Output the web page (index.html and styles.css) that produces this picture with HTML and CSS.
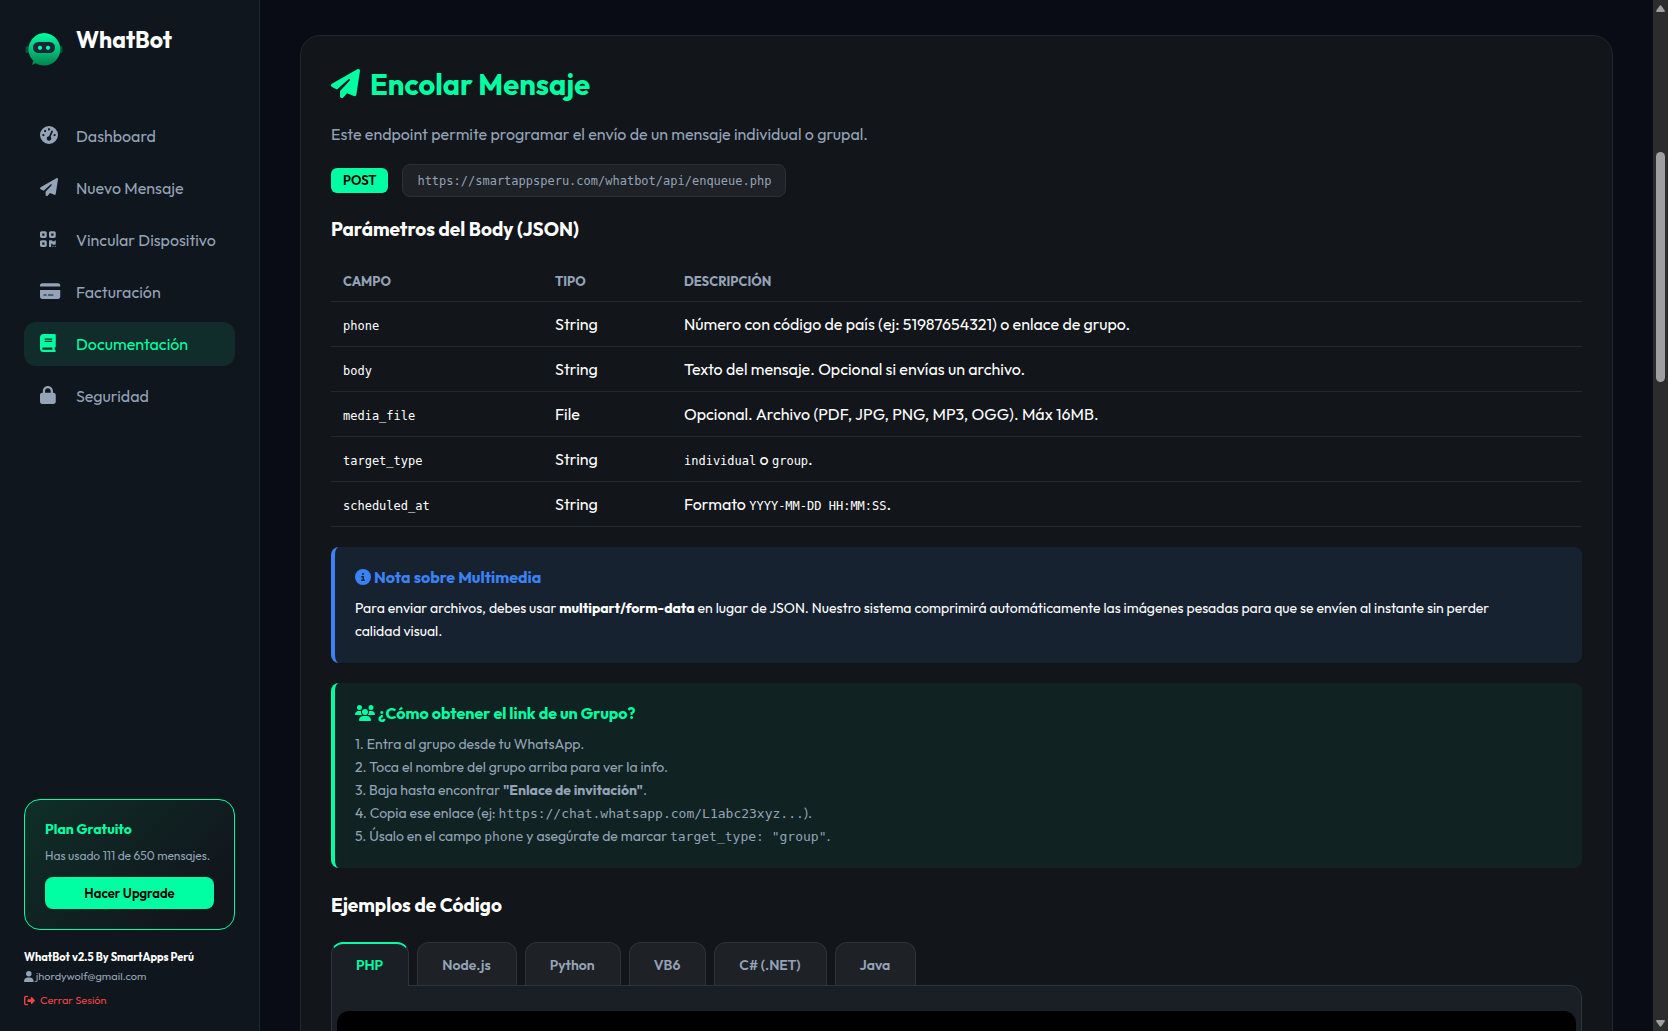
FILE: index.html
```html
<!DOCTYPE html>
<html lang="es">
<head>
<meta charset="utf-8">
<meta name="viewport" content="width=device-width, initial-scale=1">
<title>WhatBot - Documentación</title>
<link rel="stylesheet" href="styles.css">
</head>
<body>
<svg class="sprite" aria-hidden="true">
  <symbol id="plane" viewBox="0 0 512 512"><path d="M498.1 5.6c10.1 7 15.4 19.1 13.5 31.2l-64 416c-1.5 9.7-7.4 18.2-16 23s-18.9 5.4-28 1.6L284 427.7l-68.5 74.1c-8.9 9.7-22.9 12.9-35.2 8.1S160 493.2 160 480V396.4c0-4 1.5-7.8 4.2-10.7L331.8 202.8c5.8-6.3 5.6-16-.4-22s-15.7-6.4-22-.7L106 360.8 17.7 316.6C7.1 311.3 .3 300.7 0 288.9s5.9-22.8 16.1-28.7l448-256c10.7-6.1 23.9-5.5 34 1.4z"/></symbol>
</svg>
<div class="app">
  <aside class="sidebar">
    <div class="brand">
      <svg class="brand-logo" viewBox="0 0 40 40" aria-hidden="true">
        <defs><linearGradient id="bot" x1="0" y1="0" x2="0" y2="1"><stop offset="0" stop-color="#00ffa3"/><stop offset="1" stop-color="#04824f"/></linearGradient></defs>
        <rect x="1.500" y="17" width="4" height="7" rx="1.500" fill="#07513b"/>
        <rect x="34.500" y="17" width="4" height="7" rx="1.500" fill="#07513b"/>
        <path d="M20 4a16.300 16.300 0 1 1-8.500 30.200L8 36l1.200-4.200A16.300 16.300 0 0 1 20 4z" fill="url(#bot)"/>
        <rect x="9" y="13" width="22" height="11" rx="5.500" fill="#1b2638"/>
        <circle cx="16" cy="18.800" r="2.100" fill="#00ffa3"/>
        <circle cx="24" cy="18.800" r="2.100" fill="#00ffa3"/>
      </svg>
      <span class="brand-name">WhatBot</span>
    </div>
    <nav class="nav">
      <a class="nav-link" href="#dashboard"><svg class="nav-icon" viewBox="0 0 512 512" preserveAspectRatio="xMinYMid"><path d="M0 256a256 256 0 1 1 512 0A256 256 0 1 1 0 256zM288 96a32 32 0 1 0 -64 0 32 32 0 1 0 64 0zM256 416c35.3 0 64-28.700 64-64c0-17.400-6.900-33.100-18.100-44.600L366 161.700c5.300-12.100-.2-26.300-12.300-31.600s-26.300 .2-31.600 12.300L257.900 288c-.6 0-1.300 0-1.900 0c-35.300 0-64 28.700-64 64s28.700 64 64 64zM176 144a32 32 0 1 0 -64 0 32 32 0 1 0 64 0zM96 288a32 32 0 1 0 0-64 32 32 0 1 0 0 64zm352-32a32 32 0 1 0 -64 0 32 32 0 1 0 64 0z"/></svg><span>Dashboard</span></a>
      <a class="nav-link" href="#mensaje"><svg class="nav-icon" viewBox="0 0 512 512" preserveAspectRatio="xMinYMid"><use href="#plane" width="512" height="512"/></svg><span>Nuevo Mensaje</span></a>
      <a class="nav-link" href="#vincular"><svg class="nav-icon" viewBox="0 0 448 512" preserveAspectRatio="xMinYMid"><path d="M0 80C0 53.500 21.500 32 48 32h96c26.500 0 48 21.500 48 48v96c0 26.500-21.500 48-48 48H48c-26.500 0-48-21.500-48-48V80zM64 96v64h64V96H64zM0 336c0-26.500 21.500-48 48-48h96c26.500 0 48 21.500 48 48v96c0 26.500-21.500 48-48 48H48c-26.500 0-48-21.500-48-48V336zm64 16v64h64V352H64zM304 32h96c26.500 0 48 21.500 48 48v96c0 26.500-21.500 48-48 48H304c-26.500 0-48-21.500-48-48V80c0-26.500 21.500-48 48-48zm80 64H320v64h64V96zM256 304c0-8.800 7.200-16 16-16h64c8.800 0 16 7.200 16 16s7.200 16 16 16h32c8.800 0 16-7.200 16-16s7.200-16 16-16s16 7.200 16 16v96c0 8.800-7.200 16-16 16H368c-8.800 0-16-7.200-16-16s-7.200-16-16-16s-16 7.200-16 16v64c0 8.800-7.200 16-16 16H272c-8.800 0-16-7.200-16-16V304zM368 480a16 16 0 1 1 0-32 16 16 0 1 1 0 32zm64 0a16 16 0 1 1 0-32 16 16 0 1 1 0 32z"/></svg><span>Vincular Dispositivo</span></a>
      <a class="nav-link" href="#facturacion"><svg class="nav-icon" viewBox="0 0 576 512" preserveAspectRatio="xMinYMid"><path d="M64 32C28.700 32 0 60.700 0 96v32H576V96c0-35.300-28.700-64-64-64H64zM576 224H0V416c0 35.300 28.700 64 64 64H512c35.300 0 64-28.700 64-64V224zM112 352h64c8.800 0 16 7.200 16 16s-7.200 16-16 16H112c-8.800 0-16-7.200-16-16s7.200-16 16-16zm112 16c0-8.800 7.200-16 16-16H368c8.800 0 16 7.200 16 16s-7.200 16-16 16H240c-8.800 0-16-7.200-16-16z"/></svg><span>Facturación</span></a>
      <a class="nav-link active" href="#documentacion" aria-current="page"><svg class="nav-icon" viewBox="0 0 448 512" preserveAspectRatio="xMinYMid"><path d="M96 0C43 0 0 43 0 96V416c0 53 43 96 96 96H384h32c17.700 0 32-14.300 32-32s-14.300-32-32-32V384c17.700 0 32-14.300 32-32V32c0-17.700-14.300-32-32-32H384 96zm0 384H352v64H96c-17.700 0-32-14.300-32-32s14.300-32 32-32zm32-240c0-8.800 7.200-16 16-16H336c8.800 0 16 7.200 16 16s-7.200 16-16 16H144c-8.800 0-16-7.200-16-16zm16 48H336c8.800 0 16 7.200 16 16s-7.200 16-16 16H144c-8.800 0-16-7.200-16-16s7.200-16 16-16z"/></svg><span>Documentación</span></a>
      <a class="nav-link" href="#seguridad"><svg class="nav-icon" viewBox="0 0 448 512" preserveAspectRatio="xMinYMid"><path d="M144 144v48H304V144c0-44.200-35.800-80-80-80s-80 35.800-80 80zM80 192V144C80 64.500 144.500 0 224 0s144 64.500 144 144v48h16c35.300 0 64 28.700 64 64V448c0 35.300-28.700 64-64 64H64c-35.300 0-64-28.700-64-64V256c0-35.300 28.700-64 64-64H80z"/></svg><span>Seguridad</span></a>
    </nav>
    <div class="plan">
      <div class="plan-title">Plan Gratuito</div>
      <div class="plan-usage">Has usado 111 de 650 mensajes.</div>
      <button class="plan-button" type="button">Hacer Upgrade</button>
    </div>
    <div class="account">
      <div class="account-name">WhatBot v2.5 By SmartApps Perú</div>
      <div class="account-mail"><svg class="account-icon" viewBox="0 0 448 512"><path d="M224 256A128 128 0 1 0 224 0a128 128 0 1 0 0 256zm-45.700 48C79.800 304 0 383.800 0 482.300C0 498.700 13.300 512 29.700 512H418.300c16.400 0 29.700-13.300 29.700-29.700C448 383.800 368.200 304 269.700 304H178.300z"/></svg>jhordywolf@gmail.com</div>
      <a class="logout" href="#salir"><svg class="account-icon" viewBox="0 0 512 512"><path d="M377.900 105.900L500.700 228.700c7.200 7.200 11.300 17.100 11.300 27.300s-4.100 20.100-11.300 27.300L377.900 406.100c-6.400 6.400-15 9.900-24 9.900c-18.700 0-33.900-15.200-33.900-33.900l0-62.100-128 0c-17.700 0-32-14.300-32-32l0-64c0-17.700 14.300-32 32-32l128 0 0-62.100c0-18.700 15.200-33.900 33.900-33.900c9 0 17.600 3.600 24 9.900zM160 96L96 96c-17.700 0-32 14.300-32 32l0 256c0 17.700 14.300 32 32 32l64 0c17.700 0 32 14.300 32 32s-14.300 32-32 32l-64 0c-53 0-96-43-96-96L0 128C0 75 43 32 96 32l64 0c17.700 0 32 14.300 32 32s-14.300 32-32 32z"/></svg>Cerrar Sesión</a>
    </div>
  </aside>

  <main class="main">
    <section class="card">
      <h1 class="title"><svg class="title-icon" viewBox="0 0 512 512" aria-hidden="true"><use href="#plane" width="512" height="512"/></svg>Encolar Mensaje</h1>
      <p class="lead">Este endpoint permite programar el envío de un mensaje individual o grupal.</p>
      <div class="endpoint">
        <span class="method">POST</span>
        <code class="url">https://smartappsperu.com/whatbot/api/enqueue.php</code>
      </div>
      <h2 class="subtitle">Parámetros del Body (JSON)</h2>
      <table class="params">
        <colgroup><col class="col-field"><col class="col-type"><col></colgroup>
        <thead><tr><th>CAMPO</th><th>TIPO</th><th>DESCRIPCIÓN</th></tr></thead>
        <tbody>
          <tr><td><code>phone</code></td><td>String</td><td>Número con código de país (ej: 51987654321) o enlace de grupo.</td></tr>
          <tr><td><code>body</code></td><td>String</td><td>Texto del mensaje. Opcional si envías un archivo.</td></tr>
          <tr><td><code>media_file</code></td><td>File</td><td>Opcional. Archivo (PDF, JPG, PNG, MP3, OGG). Máx 16MB.</td></tr>
          <tr><td><code>target_type</code></td><td>String</td><td><code>individual</code> o <code>group</code>.</td></tr>
          <tr><td><code>scheduled_at</code></td><td>String</td><td>Formato <code>YYYY-MM-DD HH:MM:SS</code>.</td></tr>
        </tbody>
      </table>
      <div class="note note-info">
        <h3 class="note-title"><svg class="note-icon" viewBox="0 0 512 512" aria-hidden="true"><path d="M256 512A256 256 0 1 0 256 0a256 256 0 1 0 0 512zM216 336h24V272H216c-13.300 0-24-10.700-24-24s10.700-24 24-24h48c13.300 0 24 10.700 24 24v88h8c13.300 0 24 10.700 24 24s-10.700 24-24 24H216c-13.300 0-24-10.700-24-24s10.700-24 24-24zm40-208a32 32 0 1 1 0 64 32 32 0 1 1 0-64z"/></svg>Nota sobre Multimedia</h3>
        <p class="note-text">Para enviar archivos, debes usar <strong>multipart/form-data</strong> en lugar de JSON. Nuestro sistema comprimirá automáticamente las imágenes pesadas para que se envíen al instante sin perder <br>calidad visual.</p>
      </div>
      <div class="note note-group">
        <h3 class="note-title"><svg class="note-icon" viewBox="0 0 640 512" aria-hidden="true"><path d="M144 0a80 80 0 1 1 0 160A80 80 0 1 1 144 0zM512 0a80 80 0 1 1 0 160A80 80 0 1 1 512 0zM0 298.700C0 239.800 47.800 192 106.700 192h42.700c15.900 0 31 3.500 44.600 9.700c-1.300 7.200-1.900 14.700-1.900 22.300c0 38.200 16.800 72.500 43.300 96c-.2 0-.4 0-.7 0H21.300C9.600 320 0 310.400 0 298.700zM405.300 320c-.2 0-.4 0-.7 0c26.600-23.500 43.300-57.800 43.300-96c0-7.600-.7-15-1.900-22.300c13.600-6.300 28.700-9.700 44.600-9.700h42.700C592.200 192 640 239.800 640 298.700c0 11.800-9.600 21.300-21.300 21.300H405.300zM224 224a96 96 0 1 1 192 0 96 96 0 1 1 -192 0zM128 485.300C128 411.700 187.700 352 261.300 352H378.700C452.300 352 512 411.700 512 485.300c0 14.700-11.900 26.700-26.700 26.700H154.700c-14.700 0-26.700-11.900-26.700-26.700z"/></svg>¿Cómo obtener el link de un Grupo?</h3>
        <p class="note-text">1. Entra al grupo desde tu WhatsApp.<br>2. Toca el nombre del grupo arriba para ver la info.<br>3. Baja hasta encontrar <strong>"Enlace de invitación"</strong>.<br>4. Copia ese enlace (ej: <code>https://chat.whatsapp.com/L1abc23xyz...</code>).<br>5. Úsalo en el campo <code>phone</code> y asegúrate de marcar <code>target_type: "group"</code>.</p>
      </div>
      <h2 class="subtitle">Ejemplos de Código</h2>
      <div class="tabs" role="tablist">
        <button class="tab active" type="button" role="tab" aria-selected="true">PHP</button>
        <button class="tab" type="button" role="tab">Node.js</button>
        <button class="tab" type="button" role="tab">Python</button>
        <button class="tab" type="button" role="tab">VB6</button>
        <button class="tab" type="button" role="tab">C# (.NET)</button>
        <button class="tab" type="button" role="tab">Java</button>
      </div>
      <div class="panel" role="tabpanel"><pre class="code"></pre></div>
    </section>
  </main>

  <div class="scrollbar" aria-hidden="true">
    <svg class="scroll-arrow" viewBox="0 0 9 7"><path d="M3.500 1q1-1.500 2 0l3.200 4.500q.6 1.500-.7 1.500H1Q-.3 7 .3 5.500z"/></svg>
    <div class="scroll-track"><div class="scroll-thumb"></div></div>
    <svg class="scroll-arrow down" viewBox="0 0 9 7"><path d="M3.500 1q1-1.500 2 0l3.200 4.500q.6 1.500-.7 1.500H1Q-.3 7 .3 5.500z"/></svg>
  </div>
</div>
</body>
</html>
```
FILE: styles.css
```css
:root {
  --accent: #00ffa3;
  --muted: #94a3b8;
  --line: #2f3337;
  --sans: Outfit, Lato, sans-serif;
  --mono: "DejaVu Sans Mono", monospace;
}

* { box-sizing: border-box; }

body {
  margin: 0;
  background: #090c14;
  color: #fff;
  font-family: var(--sans);
  font-size: 16px;
  line-height: 24px;
}

h1, h2, h3, p, pre { margin: 0; }
button { font-family: inherit; cursor: pointer; }
a { text-decoration: none; }
svg { fill: currentColor; flex: none; }
code { font-family: var(--mono); }

.sprite { display: none; }

.app {
  display: flex;
  height: 100vh;
  overflow: hidden;
}

/* Sidebar */
.sidebar {
  display: flex;
  flex-direction: column;
  flex: none;
  width: 260px;
  padding: 24px;
  background: #10161d;
  border-right: 1px solid #22272f;
}

.brand {
  display: flex;
  align-items: center;
  gap: 12px;
  height: 50px;
  margin-bottom: 40px;
}

.brand-logo { width: 40px; height: 40px; }

.brand-name {
  align-self: flex-start;
  font-size: 23px;
  font-weight: 700;
  line-height: 32px;
}

.nav {
  display: flex;
  flex-direction: column;
  gap: 8px;
  margin-bottom: auto;
}

.nav-link {
  display: flex;
  align-items: flex-start;
  padding: 12px 16px;
  border-radius: 12px;
  color: var(--muted);
  line-height: 20px;
}

.nav-icon {
  width: 36px;
  height: 18px;
}

.nav-link.active {
  background: #102c2b;
  color: var(--accent);
}

.plan {
  margin-bottom: 19px;
  padding: 20px;
  border: 1px solid var(--accent);
  border-radius: 16px;
  background: linear-gradient(135deg, #0f2f28, #11151c 85%);
}

.plan-title {
  margin-bottom: 10px;
  color: var(--accent);
  font-size: 14px;
  font-weight: 700;
  line-height: 18px;
}

.plan-usage {
  margin-bottom: 13px;
  color: var(--muted);
  font-size: 12px;
  line-height: 16px;
}

.plan-button {
  width: 100%;
  height: 32px;
  padding: 0;
  border: 0;
  border-radius: 8px;
  background: var(--accent);
  color: #000;
  font-size: 13px;
  font-weight: 600;
}

.account {
  color: var(--muted);
  font-size: 11px;
  line-height: 16px;
}

.account-name {
  margin-bottom: 3px;
  color: #fff;
  font-weight: 700;
}

.account-mail {
  display: flex;
  align-items: center;
  gap: 2px;
  margin-bottom: 9px;
}

.logout {
  display: flex;
  align-items: center;
  gap: 5px;
  color: #ef4444;
  line-height: 14px;
}

.account-icon { height: 11px; }

/* Content */
.main {
  flex: 1;
  min-width: 0;
  padding: 35px 40px;
}

.card {
  padding: 30px;
  border: 1px solid #22262b;
  border-radius: 20px;
  background: #12161a;
}

.title {
  display: flex;
  align-items: center;
  gap: 10px;
  margin-bottom: 18px;
  color: var(--accent);
  font-size: 29px;
  font-weight: 700;
  line-height: 38px;
}

.title-icon {
  width: 29px;
  height: 29px;
  margin-bottom: 4px;
}

.lead {
  margin-bottom: 18px;
  color: var(--muted);
}

.endpoint {
  display: flex;
  align-items: center;
  gap: 14px;
  margin-bottom: 20px;
}

.method {
  padding: 2px 12px;
  border-radius: 6px;
  background: var(--accent);
  color: #000;
  font-size: 13px;
  font-weight: 600;
  line-height: 21px;
}

.url {
  padding: 6px 14px 4px;
  border: 1px solid #2d3135;
  border-radius: 8px;
  background: #1e2125;
  color: var(--muted);
  font-size: 12px;
  line-height: 21px;
}

.subtitle {
  font-size: 19px;
  font-weight: 700;
  line-height: 24px;
}

.params {
  width: 100%;
  margin: 20px 0;
  border-collapse: separate;
  border-spacing: 0;
  table-layout: fixed;
}

.col-field { width: 212px; }
.col-type { width: 129px; }

.params th,
.params td {
  padding: 10px 12px;
  border-bottom: 1px solid #25292d;
  text-align: left;
}

.params th {
  color: var(--muted);
  font-size: 13px;
  line-height: 20px;
}

.params code {
  font-size: 12px;
  line-height: 20px;
}

.note {
  margin-bottom: 20px;
  padding: 20px;
  border-left: 4px solid;
  border-radius: 8px;
}

.note-info {
  border-color: #3b82f6;
  background: #172231;
}

.note-group {
  margin-bottom: 25px;
  border-color: var(--accent);
  background: #102221;
}

.note-title {
  display: flex;
  align-items: center;
  gap: 3px;
  margin-bottom: 10px;
  font-size: 16px;
  font-weight: 700;
  line-height: 20px;
}

.note-info .note-title { color: #3b82f6; }
.note-group .note-title { color: var(--accent); }
.note-icon { height: 16px; }

.note-text {
  font-size: 14px;
  line-height: 23px;
}

.note-text code {
  font-size: 13px;
  line-height: 20px;
}

.note-group .note-text { color: var(--muted); }

.tabs {
  display: flex;
  gap: 8px;
  margin: 25px 0 -1px;
}

.tab {
  height: 43px;
  padding: 1px 25px 0 24px;
  border: 1px solid var(--line);
  border-bottom: 0;
  border-radius: 12px 12px 0 0;
  background: #1e2125;
  color: var(--muted);
  font-size: 14px;
  font-weight: 600;
}

.tab.active {
  z-index: 1;
  height: 44px;
  padding-top: 0;
  border-top: 2px solid var(--accent);
  background: #1a1f26;
  color: var(--accent);
}

.panel {
  padding: 25px 5px;
  border: 1px solid var(--line);
  border-radius: 0 12px 12px 12px;
  background: #1a1f26;
}

.code {
  min-height: 400px;
  border-radius: 12px;
  background: #000;
}

/* Scrollbar */
.scrollbar {
  display: flex;
  flex-direction: column;
  align-items: center;
  flex: none;
  width: 15px;
  padding: 5px 0 4px;
  background: #2c2c2c;
  color: #9f9f9f;
}

.scroll-arrow { width: 9px; height: 7px; }
.scroll-arrow.down { transform: rotate(180deg); }

.scroll-track {
  flex: 1;
  width: 9px;
  padding-top: 140px;
}

.scroll-thumb {
  height: 230px;
  border-radius: 5px;
  background: #9f9f9f;
}
```
